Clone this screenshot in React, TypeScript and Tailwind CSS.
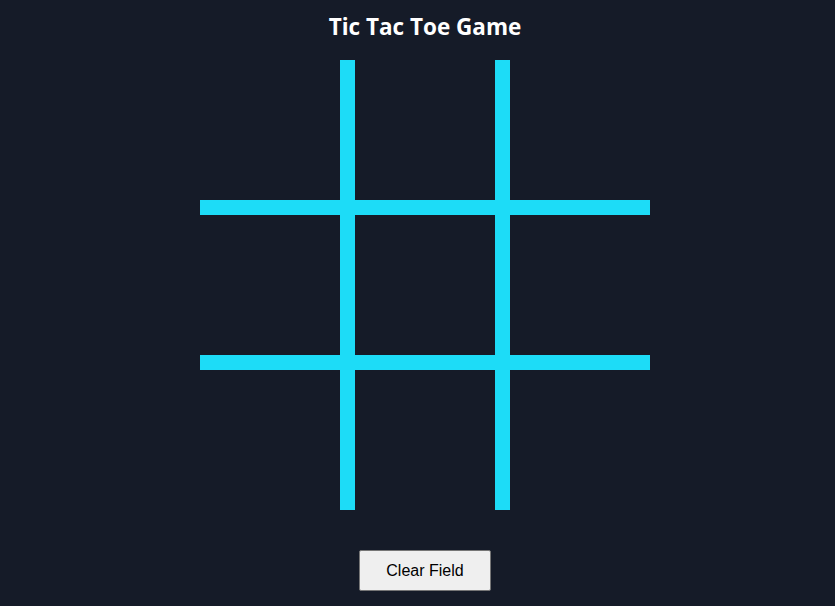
import React, { useState } from 'react';

type Mark = 'X' | 'O' | null;

export default function App() {
  const [cells, setCells] = useState<Mark[]>(Array(9).fill(null));
  const [turn, setTurn] = useState<'X' | 'O'>('X');

  const play = (i: number) => {
    if (cells[i]) return;
    const next = [...cells];
    next[i] = turn;
    setCells(next);
    setTurn(turn === 'X' ? 'O' : 'X');
  };

  const clear = () => {
    setCells(Array(9).fill(null));
    setTurn('X');
  };

  return (
    <main className="min-h-screen w-full bg-[#151b28] pl-[15px] flex flex-col items-center font-['Liberation_Sans',Arial,sans-serif]">
      {/* Title */}
      <h1 className="mt-[12px] text-[22.5px] leading-[30px] font-bold text-white font-['Open_Sans','Noto_Sans',sans-serif]">
        Tic Tac Toe Game
      </h1>

      {/* Board: grid lines come from the gap showing the cyan background */}
      <div className="mt-[18px] grid grid-cols-[repeat(3,140px)] grid-rows-[repeat(3,140px)] gap-[15px] bg-[#1ddcf7]">
        {cells.map((c, i) => (
          <button
            key={i}
            onClick={() => play(i)}
            className="bg-[#151b28] flex items-center justify-center text-6xl font-bold text-white"
          >
            {c}
          </button>
        ))}
      </div>

      {/* Controls */}
      <button
        onClick={clear}
        className="mt-[40px] w-[132px] h-[41px] bg-[#efefef] border border-[#767676] rounded-[2px] text-[16px] text-black"
      >
        Clear Field
      </button>
    </main>
  );
}
